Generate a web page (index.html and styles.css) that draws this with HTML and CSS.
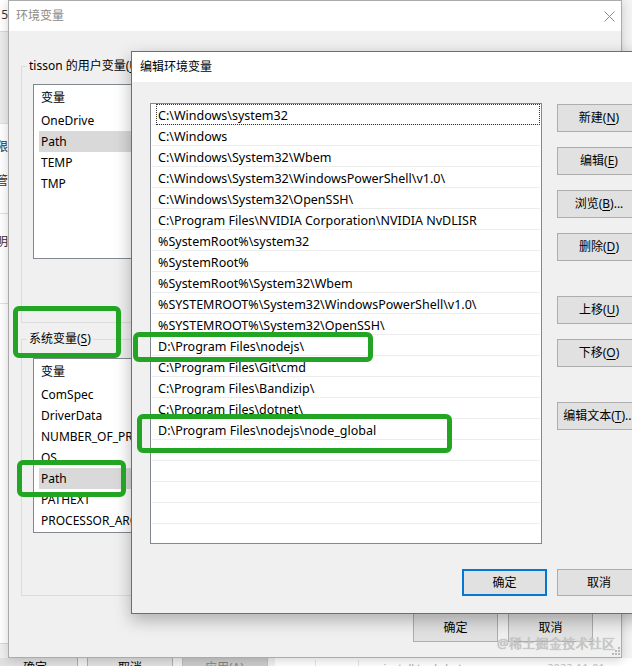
FILE: index.html
```html
<!DOCTYPE html>
<html lang="zh-CN">
<head>
    <meta charset="UTF-8">
    <meta name="viewport" content="width=device-width, initial-scale=1.0">
    <title>编辑环境变量</title>
    <link rel="stylesheet" href="styles.css">
</head>
<body>
    <div class="desktop">
        <!-- window that sits behind both dialogs -->
        <div class="backdrop">
            <div class="bg-upper">
                <div class="bg-side">
                    <div class="side-top"><span>5</span></div>
                    <div class="side-band"></div>
                    <div class="side-block first"><span>限</span><span>管</span></div>
                    <div class="side-block second"><span>明</span></div>
                    <div class="side-rest"></div>
                    <div class="side-foot"></div>
                </div>
                <div class="bg-fill"></div>
            </div>
            <div class="bg-bottom">
                <div class="bg-btn ok-btn">确定</div>
                <div class="bg-gap"></div>
                <div class="bg-btn cancel-btn">取消</div>
                <div class="bg-gap"></div>
                <div class="bg-btn apply-btn">应用(A)</div>
                <div class="bg-gap narrow"></div>
                <div class="explorer">
                    <div class="ex-col first"></div>
                    <div class="ex-col second"></div>
                    <div class="ex-name">install tools.bat</div>
                    <div class="ex-date">2022-11-01 11:44</div>
                </div>
            </div>
        </div>

        <!-- 环境变量 -->
        <div class="window outer">
            <div class="titlebar">
                <span class="title inactive">环境变量</span>
                <svg class="close" width="11" height="11" viewBox="0 0 11 11">
                    <path d="M0.5 0.5 L10.5 10.5 M10.5 0.5 L0.5 10.5" stroke="#8a8a8a" stroke-width="1" fill="none"/>
                </svg>
            </div>
            <div class="client">
                <fieldset class="group user-group">
                    <legend>tisson 的用户变量(<u>U</u>)</legend>
                    <div class="listview">
                        <div class="lv-head">变量</div>
                        <div class="lv-item">OneDrive</div>
                        <div class="lv-item selected">Path</div>
                        <div class="lv-item">TEMP</div>
                        <div class="lv-item">TMP</div>
                    </div>
                </fieldset>
                <fieldset class="group sys-group">
                    <legend>系统变量(<u>S</u>)</legend>
                    <div class="listview">
                        <div class="lv-head">变量</div>
                        <div class="lv-item">ComSpec</div>
                        <div class="lv-item">DriverData</div>
                        <div class="lv-item">NUMBER_OF_PROCESSORS</div>
                        <div class="lv-item">OS</div>
                        <div class="lv-item selected">Path</div>
                        <div class="lv-item">PATHEXT</div>
                        <div class="lv-item">PROCESSOR_ARCHITECTURE</div>
                    </div>
                </fieldset>
                <div class="dialog-footer">
                    <button class="btn wide">确定</button>
                    <button class="btn wide">取消</button>
                </div>
            </div>
            <svg class="grip" width="8" height="8" viewBox="0 0 8 8">
                <rect x="6" y="0" width="2" height="2"/>
                <rect x="3" y="3" width="2" height="2"/>
                <rect x="6" y="3" width="2" height="2"/>
                <rect x="0" y="6" width="2" height="2"/>
                <rect x="3" y="6" width="2" height="2"/>
                <rect x="6" y="6" width="2" height="2"/>
            </svg>
        </div>

        <!-- 编辑环境变量 -->
        <div class="window inner">
            <div class="titlebar">
                <span class="title">编辑环境变量</span>
            </div>
            <div class="client">
                <div class="edit-main">
                    <div class="path-list">
                        <div class="path-row focus"><span class="path-text">C:\Windows\system32</span></div>
                        <div class="path-row"><span class="path-text">C:\Windows</span></div>
                        <div class="path-row"><span class="path-text">C:\Windows\System32\Wbem</span></div>
                        <div class="path-row"><span class="path-text">C:\Windows\System32\WindowsPowerShell\v1.0\</span></div>
                        <div class="path-row"><span class="path-text">C:\Windows\System32\OpenSSH\</span></div>
                        <div class="path-row"><span class="path-text">C:\Program Files\NVIDIA Corporation\NVIDIA NvDLISR</span></div>
                        <div class="path-row"><span class="path-text">%SystemRoot%\system32</span></div>
                        <div class="path-row"><span class="path-text">%SystemRoot%</span></div>
                        <div class="path-row"><span class="path-text">%SystemRoot%\System32\Wbem</span></div>
                        <div class="path-row"><span class="path-text">%SYSTEMROOT%\System32\WindowsPowerShell\v1.0\</span></div>
                        <div class="path-row"><span class="path-text">%SYSTEMROOT%\System32\OpenSSH\</span></div>
                        <div class="path-row"><span class="path-text">D:\Program Files\nodejs\</span></div>
                        <div class="path-row"><span class="path-text">C:\Program Files\Git\cmd</span></div>
                        <div class="path-row"><span class="path-text">C:\Program Files\Bandizip\</span></div>
                        <div class="path-row"><span class="path-text">C:\Program Files\dotnet\</span></div>
                        <div class="path-row"><span class="path-text">D:\Program Files\nodejs\node_global</span></div>
                        <div class="path-row"><span class="path-text"></span></div>
                        <div class="path-row"><span class="path-text"></span></div>
                        <div class="path-row"><span class="path-text"></span></div>
                        <div class="path-row"><span class="path-text"></span></div>
                        <div class="path-row"><span class="path-text"></span></div>
                    </div>
                    <div class="btn-col">
                        <button class="btn">新建(<u>N</u>)</button>
                        <button class="btn">编辑(<u>E</u>)</button>
                        <button class="btn">浏览(<u>B</u>)...</button>
                        <button class="btn">删除(<u>D</u>)</button>
                        <button class="btn spaced">上移(<u>U</u>)</button>
                        <button class="btn">下移(<u>O</u>)</button>
                        <button class="btn spaced">编辑文本(<u>T</u>)...</button>
                    </div>
                </div>
                <div class="edit-footer">
                    <button class="btn short default">确定</button>
                    <button class="btn short">取消</button>
                </div>
            </div>
        </div>

        <!-- hand-drawn highlight boxes -->
        <div class="mark mark-sys"></div>
        <div class="mark mark-path"></div>
        <div class="mark mark-nodejs"></div>
        <div class="mark mark-global"></div>

        <div class="watermark">@稀土掘金技术社区</div>
    </div>
</body>
</html>
```

FILE: styles.css
```css
* {
    box-sizing: border-box;
}

body {
    margin: 0;
    width: 632px;
    height: 666px;
    overflow: hidden;
    font-family: "Noto Sans", "Noto Sans CJK SC", sans-serif;
    font-size: 12px;
    color: #000;
    background: #f0f0f0;
}

u {
    text-underline-offset: 2px;
}

.desktop {
    position: relative;
    width: 632px;
    height: 666px;
    overflow: hidden;
}

/* background window */
.backdrop {
    position: absolute;
    top: 0;
    left: 0;
    width: 632px;
    height: 666px;
    display: flex;
    flex-direction: column;
}

.bg-upper {
    display: flex;
    height: 658px;
}

.bg-side {
    width: 8px;
    display: flex;
    flex-direction: column;
    overflow: hidden;
    background: #fff;
    color: #333;
    line-height: 16px;
}

.bg-side span {
    display: flex;
    justify-content: flex-end;
    white-space: nowrap;
}

.side-top {
    height: 31px;
    padding-top: 7px;
}

.side-band {
    height: 92px;
    background: #ececec;
    border-top: 1px solid #d8d8d8;
}

.side-block {
    height: 90px;
    border-top: 1px solid #e0e0e0;
    display: flex;
    flex-direction: column;
    gap: 18px;
}

.side-block.first {
    padding-top: 15px;
}

.side-block.second {
    padding-top: 20px;
}

.side-rest {
    height: 340px;
    border-top: 1px solid #e0e0e0;
}

.side-foot {
    height: 15px;
    background: #f0f0f0;
    border-top: 1px solid #d8d8d8;
}

.bg-fill {
    flex: 1;
    background: #f3f3f3;
}

.bg-bottom {
    height: 8px;
    display: flex;
    overflow: hidden;
    background: #f0f0f0;
    line-height: 16px;
}

.bg-btn {
    height: 16px;
    padding-top: 2px;
    background: #e1e1e1;
    border: 1px solid #adadad;
    border-top: none;
    white-space: nowrap;
}

.ok-btn {
    width: 78px;
    border-left: none;
    padding-left: 23px;
}

.cancel-btn {
    width: 86px;
    padding-left: 30px;
}

.apply-btn {
    width: 86px;
    padding-left: 22px;
    background: #cccccc;
    border-color: #bfbfbf;
    color: #838383;
}

.bg-gap {
    width: 9px;
}

.bg-gap.narrow {
    width: 7px;
}

.explorer {
    flex: 1;
    display: flex;
    padding-top: 2px;
    background: #fff;
    color: #a8a8a8;
    font-size: 11px;
}

.ex-col {
    border-right: 1px solid #e6e6e6;
}

.ex-col.first {
    width: 43px;
}

.ex-col.second {
    width: 45px;
}

.ex-name {
    width: 195px;
    padding-left: 24px;
}

.ex-date {
    color: #c2c2c2;
}

/* dialogs */
.window {
    position: absolute;
    display: flex;
    flex-direction: column;
    background: #f0f0f0;
}

.titlebar {
    height: 30px;
    flex: none;
    display: flex;
    align-items: center;
    background: #fff;
}

.title {
    line-height: 16px;
}

.title.inactive {
    color: #8a8a8a;
}

.outer {
    left: 8px;
    top: 0;
    width: 614px;
    height: 658px;
    border: 1px solid #ababab;
    box-shadow: 0 2px 10px rgba(0, 0, 0, 0.18);
}

.outer .titlebar {
    padding-left: 7px;
}

.close {
    margin-left: auto;
    margin-right: 6px;
}

.outer .client {
    flex: 1;
    display: flex;
    flex-direction: column;
    padding: 27px 12px 0 12px;
}

.group {
    margin: 0;
    min-width: 0;
    padding: 10px 11px 63px 5px;
    border: 1px solid #dcdcdc;
}

.group legend {
    padding: 0 2px;
    line-height: 16px;
    white-space: nowrap;
}

.sys-group {
    margin-top: 8px;
    padding-top: 11px;
    padding-bottom: 62px;
}

.listview {
    width: 560px;
    height: 175px;
    margin-left: 6px;
    background: #fff;
    border: 1px solid #828790;
    overflow: hidden;
}

.lv-head {
    height: 25px;
    padding: 5px 0 0 7px;
    line-height: 16px;
}

.lv-item {
    height: 21px;
    margin-left: 5px;
    padding: 2px 0 0 2px;
    line-height: 18px;
    white-space: nowrap;
}

.lv-item.selected {
    background: #d9d9d9;
}

.dialog-footer {
    display: flex;
    justify-content: flex-end;
    gap: 10px;
    margin-top: 17px;
    margin-right: 16px;
}

.btn {
    width: 84px;
    height: 28px;
    padding: 0;
    margin: 0;
    font: inherit;
    color: #000;
    line-height: 26px;
    text-align: center;
    white-space: nowrap;
    background: #e1e1e1;
    border: 1px solid #adadad;
    border-radius: 0;
}

.btn.wide {
    width: 85px;
    height: 29px;
    line-height: 27px;
}

.grip {
    position: absolute;
    right: 1px;
    bottom: 2px;
    fill: #b8b8b8;
}

.inner {
    left: 131px;
    top: 51px;
    width: 529px;
    height: 563px;
    border: 1px solid #6e6e6e;
    box-shadow: 0 6px 16px rgba(0, 0, 0, 0.28);
}

.inner .titlebar {
    padding-left: 8px;
}

.inner .client {
    flex: 1;
    display: flex;
    flex-direction: column;
    padding: 21px 18px 0 18px;
}

.edit-main {
    display: flex;
}

.path-list {
    width: 392px;
    height: 441px;
    padding: 0 1px;
    font-size: 12.5px;
    background: #fff;
    border: 1px solid #828790;
    overflow: hidden;
}

.path-row {
    height: 21px;
    padding-left: 4px;
    border-bottom: 1px solid #ededed;
}

.path-text {
    display: block;
    height: 20px;
    padding: 3px 0 0 2px;
    line-height: 17px;
    white-space: nowrap;
}

.path-row.focus .path-text {
    height: 21px;
    padding: 2px 0 0 1px;
    border: 1px dotted #333;
}

.btn-col {
    display: flex;
    flex-direction: column;
    gap: 15px;
    margin-left: 15px;
    padding-top: 1px;
}

.btn.spaced {
    margin-top: 20px;
}

.edit-footer {
    display: flex;
    justify-content: flex-end;
    gap: 10px;
    margin-top: 25px;
}

.btn.short {
    height: 27px;
    line-height: 25px;
}

.btn.default {
    width: 85px;
    border: 2px solid #0078d7;
    line-height: 23px;
}

/* green annotation boxes */
.mark {
    position: absolute;
    border: 5px solid #22a522;
    border-radius: 6px;
}

.mark-sys {
    left: 13px;
    top: 306px;
    width: 108px;
    height: 52px;
}

.mark-path {
    left: 17px;
    top: 460px;
    width: 109px;
    height: 37px;
}

.mark-nodejs {
    left: 133px;
    top: 332px;
    width: 240px;
    height: 30px;
}

.mark-global {
    left: 137px;
    top: 414px;
    width: 315px;
    height: 39px;
}

.watermark {
    position: absolute;
    left: 497px;
    top: 633px;
    font-size: 13px;
    line-height: 20px;
    letter-spacing: 0.3px;
    color: #c8c8c8;
    text-shadow: 0 0 1px #a0a0a0;
    white-space: nowrap;
}
```
